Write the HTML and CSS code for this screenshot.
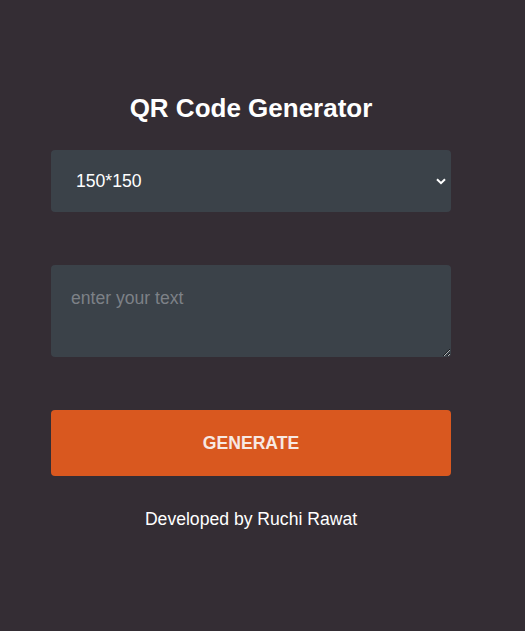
FILE: index.html
```html
<!DOCTYPE html>
<html>
<head>
<meta charset="utf-8">
<link rel="stylesheet" href="styles.css">
</head>
<body>
<main class="app">
  <h1 class="title">QR Code Generator</h1>
  <div class="select-wrap">
    <select class="size-select">
      <option>150*150</option>
      <option>200*200</option>
      <option>300*300</option>
    </select>
    <svg class="chevron" width="10" height="7" viewBox="0 0 10 7"><path d="M1 1.2 L5 5.2 L9 1.2" fill="none" stroke="#ffffff" stroke-width="2"/></svg>
  </div>
  <textarea class="text-input" placeholder="enter your text"></textarea>
  <button class="generate">GENERATE</button>
  <p class="credit">Developed by Ruchi Rawat</p>
</main>
</body>
</html>
```
FILE: styles.css
```css
html, body {
  margin: 0;
  padding: 0;
  background: #342d34;
  height: 100%;
}
body {
  font-family: "Liberation Sans", Arial, sans-serif;
  color: #ffffff;
}
.app {
  width: 400px;
  margin-left: 51px;
  padding-top: 93px;
  display: flex;
  flex-direction: column;
}
.title {
  margin: 0 0 27px;
  font-size: 26px;
  font-weight: bold;
  text-align: center;
  line-height: 30px;
}
.select-wrap {
  position: relative;
  height: 62px;
}
.size-select {
  appearance: none;
  -webkit-appearance: none;
  width: 100%;
  height: 62px;
  border: none;
  border-radius: 4px;
  background: #3b4249;
  color: #ffffff;
  font-family: inherit;
  font-size: 17.6px;
  padding: 0 0 0 25px;
  outline: none;
}
.chevron {
  position: absolute;
  right: 5px;
  top: 28px;
  pointer-events: none;
}
.text-input {
  display: block;
  box-sizing: border-box;
  margin-top: 53px;
  width: 400px;
  height: 92px;
  border: none;
  border-radius: 4px;
  background: #3b4249;
  color: #ffffff;
  font-family: inherit;
  font-size: 17.6px;
  padding: 23px 20px 20px;
  outline: none;
  resize: both;
  color-scheme: dark;
}
.text-input::placeholder {
  color: #7d8187;
}
.generate {
  margin-top: 53px;
  height: 66px;
  border: none;
  border-radius: 4px;
  background: #d9581f;
  color: #f7e9e3;
  font-family: inherit;
  font-size: 17.6px;
  font-weight: bold;
}
.credit {
  margin: 33px 0 0;
  text-align: center;
  font-size: 17.6px;
  line-height: 20px;
  color: #ffffff;
}
```
